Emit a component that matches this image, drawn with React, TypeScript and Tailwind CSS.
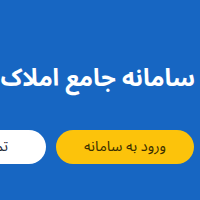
export default function App() {
  return (
    <div
      dir="rtl"
      className="w-[200px] h-[200px] overflow-hidden bg-[#1766c2] flex flex-col"
      style={{ fontFamily: '"Noto Sans Arabic", "DejaVu Sans", sans-serif' }}
    >
      {/* Hero title */}
      <h1 className="mt-[61px] pr-[5px] text-[24px] leading-[36px] font-bold text-white whitespace-nowrap">
        سامانه جامع املاک
      </h1>

      {/* Actions */}
      <div className="mt-[33px] pr-[6px] flex gap-[10px] whitespace-nowrap">
        <button className="shrink-0 w-[138px] h-[34px] rounded-full bg-[#fcc30b] text-[#3b2f00] text-[14.5px]">
          ورود به سامانه
        </button>
        <button className="shrink-0 w-[138px] h-[34px] rounded-full bg-white text-[#1f2937] text-[14.5px]">
          تماس با ما
        </button>
      </div>
    </div>
  );
}
